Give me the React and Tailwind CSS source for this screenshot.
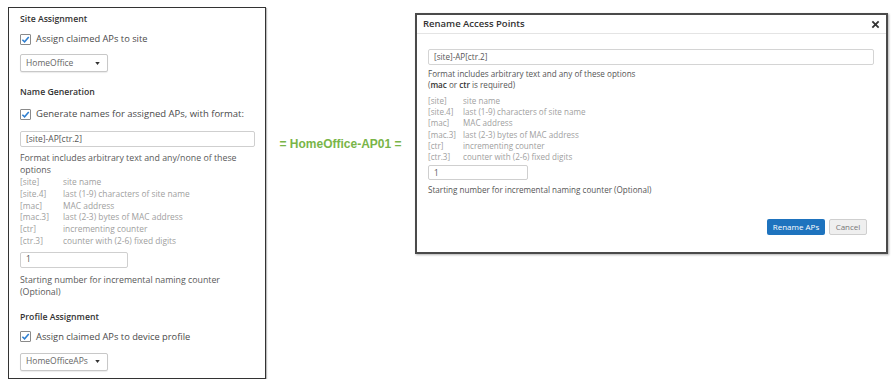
import React from "react";

function Check() {
  return (
    <span className="inline-flex items-center justify-center w-[11px] h-[11px] border border-[#8a8a8a] bg-white rounded-[1px] shrink-0">
      <svg width="9" height="9" viewBox="0 0 10 10">
        <path d="M1.5 5.2 L4 7.6 L8.6 2.2" fill="none" stroke="#2f7fd0" strokeWidth="1.7" />
      </svg>
    </span>
  );
}

function Select({ label, w }) {
  return (
    <div className={`flex items-center justify-between h-[18px] ${w} border border-[#c8c8c8] rounded-[2px] bg-white pl-[5px] pr-[7px] text-[8.5px] text-[#666] shadow-[0_1px_1px_rgba(0,0,0,0.08)]`}>
      <span>{label}</span>
      <svg width="5" height="3" viewBox="0 0 6 4"><path d="M0 0 H6 L3 4 Z" fill="#333" /></svg>
    </div>
  );
}

const leftList = [
  ["[site]", "site name"],
  ["[site.4]", "last (1-9) characters of site name"],
  ["[mac]", "MAC address"],
  ["[mac.3]", "last (2-3) bytes of MAC address"],
  ["[ctr]", "incrementing counter"],
  ["[ctr.3]", "counter with (2-6) fixed digits"],
];

export default function App() {
  return (
    <div className="w-[895px] h-[379px] bg-white flex items-start overflow-hidden" style={{ fontFamily: '"Open Sans", sans-serif' }}>
      {/* Left panel */}
      <div className="ml-[8px] mt-[7px] w-[258px] h-[372px] border border-[#333] shadow-[1px_1px_1px_rgba(0,0,0,0.25)] pl-[11px] pr-[10px] pt-[5px] flex flex-col text-[#4a4a4a]">
        <div className="text-[8.7px] leading-[12px] font-semibold text-[#333]">Site Assignment</div>
        <div className="mt-[7px] h-[14px] flex items-center gap-[5px] text-[9.3px] whitespace-nowrap">
          <Check />
          <span>Assign claimed APs to site</span>
        </div>
        <div className="mt-[8px]"><Select label="HomeOffice" w="w-[88px]" /></div>
        <div className="mt-[14px] text-[8.7px] leading-[12px] font-semibold text-[#333]">Name Generation</div>
        <div className="mt-[9px] h-[14px] flex items-center gap-[5px] text-[9.5px] whitespace-nowrap">
          <Check />
          <span>Generate names for assigned APs, with format:</span>
        </div>
        <div className="mt-[10px] h-[16px] w-[235px] border border-[#cfcfcf] rounded-[2px] pl-[5px] flex items-center text-[8.5px] text-[#555]">[site]-AP[ctr.2]</div>
        <div className="mt-[5px] text-[8.8px] leading-[12px] text-[#5a5a5a]">Format includes arbitrary text and any/none of these<br />options</div>
        <div className="text-[8.4px] leading-[11.8px] text-[#a0a0a0]">
          {leftList.map(([k, v]) => (
            <div key={k} className="flex">
              <span className="w-[43px] shrink-0">{k}</span>
              <span>{v}</span>
            </div>
          ))}
        </div>
        <div className="mt-[5px] h-[16px] w-[108px] border border-[#cfcfcf] rounded-[2px] pl-[5px] flex items-center text-[8.5px] text-[#555]">1</div>
        <div className="mt-[6px] text-[8.8px] leading-[12px] text-[#5a5a5a]">Starting number for incremental naming counter<br />(Optional)</div>
        <div className="mt-[13px] text-[8.7px] leading-[12px] font-semibold text-[#333]">Profile Assignment</div>
        <div className="mt-[7px] h-[14px] flex items-center gap-[5px] text-[9.3px] whitespace-nowrap">
          <Check />
          <span>Assign claimed APs to device profile</span>
        </div>
        <div className="mt-[9px]"><Select label="HomeOfficeAPs" w="w-[88px]" /></div>
      </div>

      {/* Middle */}
      <div className="w-[149px] mt-[136px] flex justify-center">
        <span className="text-[12px] leading-[16px] font-bold text-[#79b548]" style={{ fontFamily: '"Liberation Sans", Arial, sans-serif' }}>= HomeOffice-AP01 =</span>
      </div>

      {/* Dialog */}
      <div className="mt-[13px] w-[473px] h-[241px] border-2 border-[#4a4a4a] bg-white shadow-[1px_1px_2px_rgba(0,0,0,0.3)] flex flex-col">
        <div className="h-[19px] border-b border-[#e4e4e4] flex items-center justify-between pl-[6px] pr-[6px]">
          <span className="text-[9.5px] font-semibold text-[#333]">Rename Access Points</span>
          <svg width="9" height="9" viewBox="0 0 10 10"><path d="M1.5 1.5 L8.5 8.5 M8.5 1.5 L1.5 8.5" stroke="#333" strokeWidth="2" /></svg>
        </div>
        <div className="pl-[11px] pr-[12px] flex flex-col">
          <div className="mt-[15px] h-[16px] w-full border border-[#d4d4d4] rounded-[2px] pl-[5px] flex items-center text-[8.1px] text-[#555]">[site]-AP[ctr.2]</div>
          <div className="mt-[3px] text-[8.1px] leading-[11px] text-[#555]">
            Format includes arbitrary text and any of these options<br />
            (<b className="font-semibold text-[#333]">mac</b> or <b className="font-semibold text-[#333]">ctr</b> is required)
          </div>
          <div className="mt-[5px] text-[8.1px] leading-[11.2px] text-[#a0a0a0]">
            {leftList.map(([k, v]) => (
              <div key={k} className="flex">
                <span className="w-[35px] shrink-0">{k}</span>
                <span>{v}</span>
              </div>
            ))}
          </div>
          <div className="mt-[3px] h-[15px] w-[100px] border border-[#cfcfcf] rounded-[2px] pl-[5px] flex items-center text-[8.1px] text-[#555]">1</div>
          <div className="mt-[4px] text-[8.1px] leading-[11px] text-[#555]">Starting number for incremental naming counter (Optional)</div>
          <div className="mt-[24px] flex justify-end gap-[4px] pr-[7px]">
            <div className="h-[16px] w-[58px] bg-[#1e73be] rounded-[2px] flex items-center justify-center text-[8px] text-white">Rename APs</div>
            <div className="h-[16px] w-[38px] bg-[#efefef] border border-[#cfcfcf] rounded-[2px] flex items-center justify-center text-[8px] text-[#777]">Cancel</div>
          </div>
        </div>
      </div>
    </div>
  );
}
